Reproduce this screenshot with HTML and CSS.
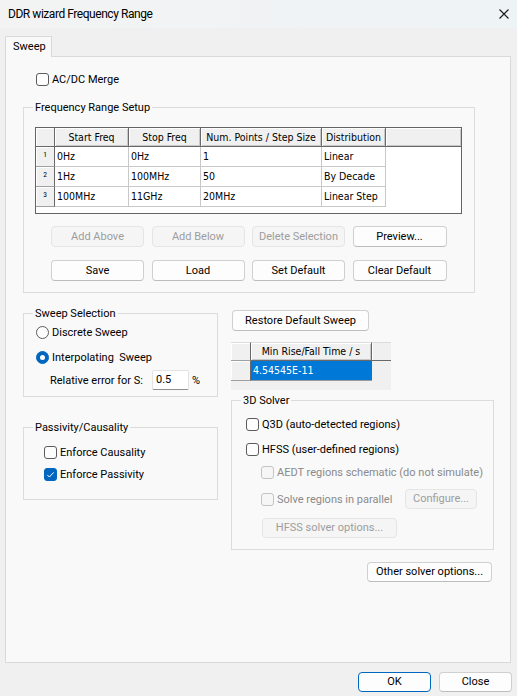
FILE: index.html
```html
<!DOCTYPE html>
<html>
<head>
<meta charset="utf-8">
<link rel="stylesheet" href="styles.css">
</head>
<body>
<div class="titlebar">
  <span class="title">DDR wizard Frequency Range</span>
  <svg class="close-x" width="10" height="10" viewBox="0 0 10 10"><path d="M0.5 0.5L9.5 9.5M9.5 0.5L0.5 9.5" stroke="#1a1a1a" stroke-width="1.1" fill="none"/></svg>
</div>
<div class="main">
  <div class="tabs"><div class="tab">Sweep</div></div>
  <div class="panel">
    <div class="check acdc"><span class="box"></span><span>AC/DC Merge</span></div>

    <fieldset class="group freq">
      <legend>Frequency Range Setup</legend>
      <div class="ftable">
        <div class="frow head">
          <div class="c rh"></div>
          <div class="c w1 hc">Start Freq</div>
          <div class="c w2 hc">Stop Freq</div>
          <div class="c w3 hc">Num. Points / Step Size</div>
          <div class="c w4 hc">Distribution</div>
          <div class="c w5 hc"></div>
        </div>
        <div class="frow">
          <div class="c rh"><span class="rn">1</span></div>
          <div class="c w1 dc">0Hz</div>
          <div class="c w2 dc">0Hz</div>
          <div class="c w3 dc">1</div>
          <div class="c w4 dc">Linear</div>
        </div>
        <div class="frow">
          <div class="c rh"><span class="rn">2</span></div>
          <div class="c w1 dc">1Hz</div>
          <div class="c w2 dc">100MHz</div>
          <div class="c w3 dc">50</div>
          <div class="c w4 dc">By Decade</div>
        </div>
        <div class="frow">
          <div class="c rh"><span class="rn">3</span></div>
          <div class="c w1 dc">100MHz</div>
          <div class="c w2 dc">11GHz</div>
          <div class="c w3 dc">20MHz</div>
          <div class="c w4 dc">Linear Step</div>
        </div>
      </div>
      <div class="btnrow first">
        <div class="btn dis">Add Above</div>
        <div class="btn dis">Add Below</div>
        <div class="btn dis">Delete Selection</div>
        <div class="btn">Preview...</div>
      </div>
      <div class="btnrow second">
        <div class="btn">Save</div>
        <div class="btn">Load</div>
        <div class="btn">Set Default</div>
        <div class="btn">Clear Default</div>
      </div>
    </fieldset>

    <div class="cols">
      <div class="col-left">
        <fieldset class="group sweepsel">
          <legend>Sweep Selection</legend>
          <div class="check"><span class="radio"></span><span>Discrete Sweep</span></div>
          <div class="check r2"><span class="radio on"></span><span>Interpolating&nbsp; Sweep</span></div>
          <div class="relrow">
            <span class="rellabel">Relative error for S:</span>
            <span class="input">0.5</span>
            <span class="pct">%</span>
          </div>
        </fieldset>
        <fieldset class="group passiv">
          <legend>Passivity/Causality</legend>
          <div class="check"><span class="box"></span><span>Enforce Causality</span></div>
          <div class="check p2"><span class="box on"><svg width="13" height="13" viewBox="0 0 13 13"><path d="M3.3 6.9l2.1 2.1 4.3-4.6" fill="none" stroke="#fff" stroke-width="1"/></svg></span><span>Enforce Passivity</span></div>
        </fieldset>
      </div>
      <div class="col-right">
        <div class="btn restore">Restore Default Sweep</div>
        <div class="mtable">
          <div class="mrow mhead">
            <div class="m mc"></div>
            <div class="m mw hc">Min Rise/Fall Time / s</div>
            <div class="m mf"></div>
          </div>
          <div class="mrow">
            <div class="m mc"></div>
            <div class="m mw sel">4.54545E-11</div>
          </div>
        </div>
        <fieldset class="group solver">
          <legend>3D Solver</legend>
          <div class="check"><span class="box"></span><span>Q3D (auto-detected regions)</span></div>
          <div class="check s2"><span class="box"></span><span>HFSS (user-defined regions)</span></div>
          <div class="check s3 disabled"><span class="box"></span><span>AEDT regions schematic (do not simulate)</span></div>
          <div class="s4">
            <div class="check disabled s4label"><span class="box"></span><span>Solve regions in parallel</span></div>
            <div class="btn dis configure">Configure...</div>
          </div>
          <div class="btn dis hfssopt">HFSS solver options...</div>
        </fieldset>
        <div class="btn other">Other solver options...</div>
      </div>
    </div>
  </div>
  <div class="footer">
    <div class="btn ok">OK</div>
    <div class="btn">Close</div>
  </div>
</div>
</body>
</html>
```
FILE: styles.css
```css
* { box-sizing: border-box; }
html, body { margin: 0; padding: 0; }
body {
  width: 517px;
  height: 696px;
  overflow: hidden;
  background: #f0f0f0;
  font-family: Roboto, "Noto Sans", sans-serif;
  font-size: 11px;
  line-height: 15px;
  color: #000;
}

.titlebar {
  height: 28px;
  display: flex;
  align-items: center;
  justify-content: space-between;
  padding: 0 8px 0 8px;
  background: linear-gradient(90deg, #f3f3f3, #eef3f6);
}
.title { font-size: 12px; letter-spacing: -0.45px; color: #000; }
.close-x { display: block; }

.main { padding: 8px 0 0 5px; }
.tabs { display: flex; height: 20px; }
.tab {
  position: relative;
  z-index: 1;
  width: 47px;
  height: 21px;
  border: 1px solid #d9d9d9;
  border-bottom: none;
  background: #f9f9f9;
  padding-left: 7px;
  line-height: 19px;
}
.panel {
  width: 506px;
  height: 607px;
  border: 1px solid #d9d9d9;
  background: #f9f9f9;
  padding: 15px 0 0 17px;
}

/* check boxes / radios */
.check { display: flex; align-items: center; height: 15px; gap: 3px; white-space: nowrap; }
.box {
  width: 13px; height: 13px;
  border: 1px solid #5c5c5c;
  border-radius: 3px;
  background: #fdfdfd;
  flex: none;
  display: block;
}
.box svg { display: block; margin: -1px; }
.box.on { background: #0067c0; border-color: #0067c0; }
.radio {
  width: 13px; height: 13px;
  border: 1px solid #5c5c5c;
  border-radius: 50%;
  background: #fdfdfd;
  flex: none;
  display: flex; align-items: center; justify-content: center;
}
.radio.on { background: #0067c0; border-color: #0067c0; }
.radio.on::after { content: ""; width: 5px; height: 5px; border-radius: 50%; background: #fff; }
.disabled { color: #8a8a8a; }
.disabled .box { border-color: #c4c4c4; background: #f6f6f6; }

.acdc { margin-left: 13px; }

/* groups */
.group {
  margin: 0;
  min-width: 0;
  border: 1px solid #dcdcdc;
}
.group legend { padding: 0 2px; line-height: 15px; }

.freq { margin-top: 13px; width: 452px; padding: 12px 12px 11px 11px; }
.freq legend { margin-left: -2px; }

/* frequency table */
.ftable {
  width: 427px; height: 87px;
  border: 1px solid #646464;
  background: #fff;
  font-family: "DejaVu Sans Condensed", "DejaVu Sans", sans-serif;
  font-stretch: condensed;
  font-size: 10.5px;
}
.frow { display: flex; height: 20px; }
.frow.head { height: 19px; }
.c { height: 100%; flex: none; }
.rh { width: 19px; background: #f0f0f0; border-right: 1px solid #696969; border-bottom: 1px solid #a0a0a0; box-shadow: inset 1px 1px 0 #fff; text-align: center; }
.head .rh { border-bottom: 1px solid #696969; }
.rn { display: block; font-family: Roboto, sans-serif; font-size: 7.5px; line-height: 9px; padding-top: 3px; color: #000; }
.w1 { width: 74px; }
.w2 { width: 72px; }
.w3 { width: 121px; }
.w4 { width: 64px; }
.w5 { width: 75px; }
.hc {
  background: #f0f0f0;
  border-right: 1px solid #696969;
  border-bottom: 1px solid #696969;
  box-shadow: inset 1px 1px 0 #fff, inset -1px -1px 0 #c8c8c8;
  text-align: center;
  line-height: 18px;
  white-space: nowrap;
}
.hc.w5 { border-right: none; }
.dc {
  border-right: 1px solid #c8c8c8;
  border-bottom: 1px solid #c8c8c8;
  padding-left: 2px;
  line-height: 19px;
  white-space: nowrap;
}

/* buttons */
.btn {
  height: 21px;
  border: 1px solid #d0d0d0;
  border-bottom-color: #bdbdbd;
  border-radius: 4px;
  background: #fdfdfd;
  text-align: center;
  line-height: 19px;
  white-space: nowrap;
  flex: none;
}
.btn.dis { background: #f5f5f5; border-color: #e5e5e5; color: #9d9d9d; }
.btnrow { display: flex; gap: 7.5px; padding-left: 16px; }
.btnrow .btn { width: 93px; }
.btnrow .btn:last-child { width: 94px; }
.btnrow.first { margin-top: 12px; }
.btnrow.second { margin-top: 13px; }

/* columns */
.cols { display: flex; gap: 13px; margin-top: 13px; }
.col-left { width: 195px; display: flex; flex-direction: column; }
.col-right { width: 263px; display: flex; flex-direction: column; }

.sweepsel { padding: 4px 8px 6px 12px; }
.sweepsel legend { margin-left: -3px; }
.sweepsel .r2 { margin-top: 10px; }
.relrow { display: flex; align-items: center; height: 20px; margin-top: 5px; padding-left: 14px; }
.rellabel { width: 102px; flex: none; }
.input {
  width: 37px; height: 20px; flex: none;
  border: 1px solid #e3e3e3;
  border-bottom-color: #8f8f8f;
  border-radius: 2px;
  background: #fff;
  padding-left: 3px;
  line-height: 18px;
}
.pct { margin-left: 3px; }

.passiv { margin-top: 23px; padding: 10px 8px 17px 20px; }
.passiv legend { margin-left: -11px; }
.passiv .p2 { margin-top: 7px; }

.restore { width: 137px; margin-top: 4px; margin-left: 1px; }

/* min rise table */
.mtable {
  width: 160px; height: 48px;
  margin-top: 11px;
  background: #f0f0f0;
  font-family: "DejaVu Sans Condensed", "DejaVu Sans", sans-serif;
  font-stretch: condensed;
  font-size: 10.5px;
}
.mrow { display: flex; height: 20px; }
.mrow.mhead { height: 19px; }
.m { height: 100%; flex: none; }
.mc { width: 20px; background: #f0f0f0; border-right: 1px solid #696969; border-bottom: 1px solid #a0a0a0; box-shadow: inset 1px 1px 0 #fff; }
.mhead .mc { border-top: 1px solid #dcdcdc; }
.mw { width: 121px; }
.mhead .mw { border-top: 1px solid #dcdcdc; line-height: 17px; }
.mf { width: 19px; background: #f0f0f0; border-top: 1px solid #dcdcdc; border-bottom: 1px solid #696969; box-shadow: inset 1px 0 0 #fff; }
.sel { background: #0078d7; color: #fff; padding-left: 2px; line-height: 19px; border-bottom: 1px solid #9a9a9a; }

.solver { margin-top: 3px; padding: 9px 8px 11px 14px; }
.solver legend { margin-left: -5px; }
.solver .s2 { margin-top: 10px; }
.solver .s3 { margin-top: 8px; margin-left: 15px; }
.s4 { display: flex; align-items: center; height: 20px; margin-top: 9px; margin-left: 15px; }
.s4label { width: 144px; flex: none; }
.configure { width: 72px; height: 20px; line-height: 18px; }
.hfssopt { width: 135px; height: 20px; line-height: 18px; margin-top: 9px; margin-left: 16px; }

.other { width: 125px; height: 20px; line-height: 18px; margin-top: 12px; align-self: flex-end; margin-right: 2px; }

.footer { display: flex; justify-content: flex-end; gap: 8px; padding: 9px 5px 0 0; }
.footer .btn { width: 73px; height: 20px; line-height: 18px; }
.footer .ok { border-color: #0067c0; }
```
